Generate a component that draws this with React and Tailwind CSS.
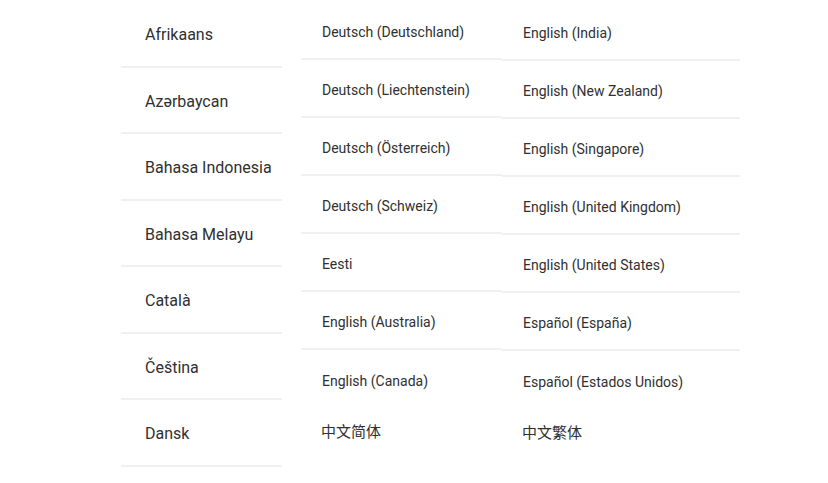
const left = [
  "Afrikaans",
  "Azərbaycan",
  "Bahasa Indonesia",
  "Bahasa Melayu",
  "Català",
  "Čeština",
  "Dansk",
];

const middle = [
  "Deutsch (Deutschland)",
  "Deutsch (Liechtenstein)",
  "Deutsch (Österreich)",
  "Deutsch (Schweiz)",
  "Eesti",
  "English (Australia)",
  "English (Canada)",
];

const right = [
  "English (India)",
  "English (New Zealand)",
  "English (Singapore)",
  "English (United Kingdom)",
  "English (United States)",
  "Español (España)",
  "Español (Estados Unidos)",
];

const LangColumn = ({ items, last, className }) => (
  <div className={className}>
    {items.map((name, i) => (
      <div
        key={name}
        className={`h-[58px] flex items-center pt-1 pl-[21px] text-[14px] ${
          i < items.length - 1 ? "border-b-2 border-[#f0f0f0]" : ""
        }`}
      >
        {name}
      </div>
    ))}
    <div className="h-[46px] flex items-center pl-5 text-[15px] font-['Noto_Sans_CJK_SC',sans-serif]">
      {last}
    </div>
  </div>
);

export default function App() {
  return (
    <div className="w-[828px] h-[483px] bg-white overflow-hidden font-['Roboto','Liberation_Sans',sans-serif] text-[#303030] flex">
      <div className="ml-[121px] w-[161px] mt-[1px]">
        {left.map((name) => (
          <div
            key={name}
            className="h-[66.5px] flex items-center pl-6 pt-1 text-[16px] border-b-2 border-[#f0f0f0]"
          >
            {name}
          </div>
        ))}
      </div>

      <LangColumn
        items={middle}
        last="中文简体"
        className="ml-[19px] w-[201px] mt-[2px]"
      />
      <LangColumn
        items={right}
        last="中文繁体"
        className="w-[238px] mt-[3px]"
      />
    </div>
  );
}
